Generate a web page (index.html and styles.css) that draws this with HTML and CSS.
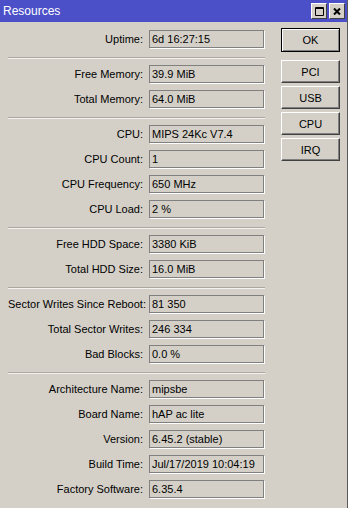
FILE: index.html
```html
<!DOCTYPE html>
<html lang="en">
<head>
    <meta charset="UTF-8">
    <meta name="viewport" content="width=device-width, initial-scale=1.0">
    <title>Resources</title>
    <link rel="stylesheet" href="styles.css">
</head>
<body>
    <div class="window">
        <div class="title-bar">
            <span class="title">Resources</span>
            <div class="title-buttons">
                <span class="title-btn">
                    <svg width="9" height="9" viewBox="0 0 9 9"><path d="M0.5 0.5h8v8h-8z" fill="none" stroke="#000"/><path d="M0 1.5h9" stroke="#000"/></svg>
                </span>
                <span class="title-btn">
                    <svg width="8" height="7" viewBox="0 0 8 7"><path d="M1 0.5l6 6M7 0.5l-6 6" stroke="#000" stroke-width="2"/></svg>
                </span>
            </div>
        </div>

        <div class="content">
            <div class="fields">
                <div class="row"><label>Uptime:</label><div class="field">6d 16:27:15</div></div>
                <div class="separator"></div>

                <div class="row"><label>Free Memory:</label><div class="field">39.9 MiB</div></div>
                <div class="row"><label>Total Memory:</label><div class="field">64.0 MiB</div></div>
                <div class="separator"></div>

                <div class="row"><label>CPU:</label><div class="field">MIPS 24Kc V7.4</div></div>
                <div class="row"><label>CPU Count:</label><div class="field">1</div></div>
                <div class="row"><label>CPU Frequency:</label><div class="field">650 MHz</div></div>
                <div class="row"><label>CPU Load:</label><div class="field">2 %</div></div>
                <div class="separator"></div>

                <div class="row"><label>Free HDD Space:</label><div class="field">3380 KiB</div></div>
                <div class="row"><label>Total HDD Size:</label><div class="field">16.0 MiB</div></div>
                <div class="separator"></div>

                <div class="row"><label>Sector Writes Since Reboot:</label><div class="field">81 350</div></div>
                <div class="row"><label>Total Sector Writes:</label><div class="field">246 334</div></div>
                <div class="row"><label>Bad Blocks:</label><div class="field">0.0 %</div></div>
                <div class="separator"></div>

                <div class="row"><label>Architecture Name:</label><div class="field">mipsbe</div></div>
                <div class="row"><label>Board Name:</label><div class="field">hAP ac lite</div></div>
                <div class="row"><label>Version:</label><div class="field">6.45.2 (stable)</div></div>
                <div class="row"><label>Build Time:</label><div class="field">Jul/17/2019 10:04:19</div></div>
                <div class="row"><label>Factory Software:</label><div class="field">6.35.4</div></div>
            </div>

            <div class="buttons">
                <button class="btn default">OK</button>
                <button class="btn first">PCI</button>
                <button class="btn">USB</button>
                <button class="btn">CPU</button>
                <button class="btn">IRQ</button>
            </div>
        </div>
    </div>
</body>
</html>
```

FILE: styles.css
```css
body {
    margin: 0;
    font-family: "Liberation Sans", Arial, sans-serif;
    font-size: 11px;
    color: #000;
    background: #d4d0c8;
}
.window {
    width: 347px;
    height: 508px;
    background-color: #d4d0c8;
    border-right: 1px solid #5a5a5a;
}
.title-bar {
    height: 22px;
    background-color: #4b4fc8;
    display: flex;
    align-items: center;
    justify-content: space-between;
}
.title {
    color: #fff;
    font-size: 12px;
    padding-left: 3px;
}
.title-buttons {
    display: flex;
    gap: 2px;
    padding-right: 2px;
}
.title-btn {
    width: 14px;
    height: 14px;
    background-color: #d4d0c8;
    border-top: 1px solid #fff;
    border-left: 1px solid #fff;
    border-right: 1px solid #404040;
    border-bottom: 1px solid #404040;
    display: flex;
    align-items: center;
    justify-content: center;
}
.content {
    display: flex;
    padding-top: 6px;
}
.fields {
    display: flex;
    flex-direction: column;
    padding-left: 8px;
    padding-top: 1px;
    width: 257px;
}
.row {
    display: flex;
    align-items: center;
    height: 19px;
    margin-bottom: 6px;
}
.row label {
    width: 135px;
    text-align: right;
    margin-right: 6px;
    white-space: nowrap;
}
.field {
    width: 115px;
    height: 18px;
    box-sizing: border-box;
    border: 1px solid #808080;
    box-shadow: 1px 1px 0 #fff;
    padding-left: 2px;
    line-height: 16px;
    white-space: nowrap;
}
.separator {
    height: 1px;
    background-color: #aca89f;
    border-bottom: 1px solid #f4f2ee;
    margin: 3px 0 5px 0;
}
.buttons {
    display: flex;
    flex-direction: column;
    gap: 3px;
    padding-left: 16px;
}
.btn {
    width: 59px;
    height: 23px;
    font-family: inherit;
    font-size: 11px;
    color: #000;
    background-color: #d4d0c8;
    border-top: 1px solid #fff;
    border-left: 1px solid #fff;
    border-right: 1px solid #404040;
    border-bottom: 1px solid #404040;
    box-shadow: inset -1px -1px 0 #808080;
    padding: 0;
}
.btn.default {
    height: 24px;
    border: 1px solid #000;
    box-shadow: inset 1px 1px 0 #fff, inset -1px -1px 0 #808080;
}
.btn.first {
    margin-top: 5px;
}
```
